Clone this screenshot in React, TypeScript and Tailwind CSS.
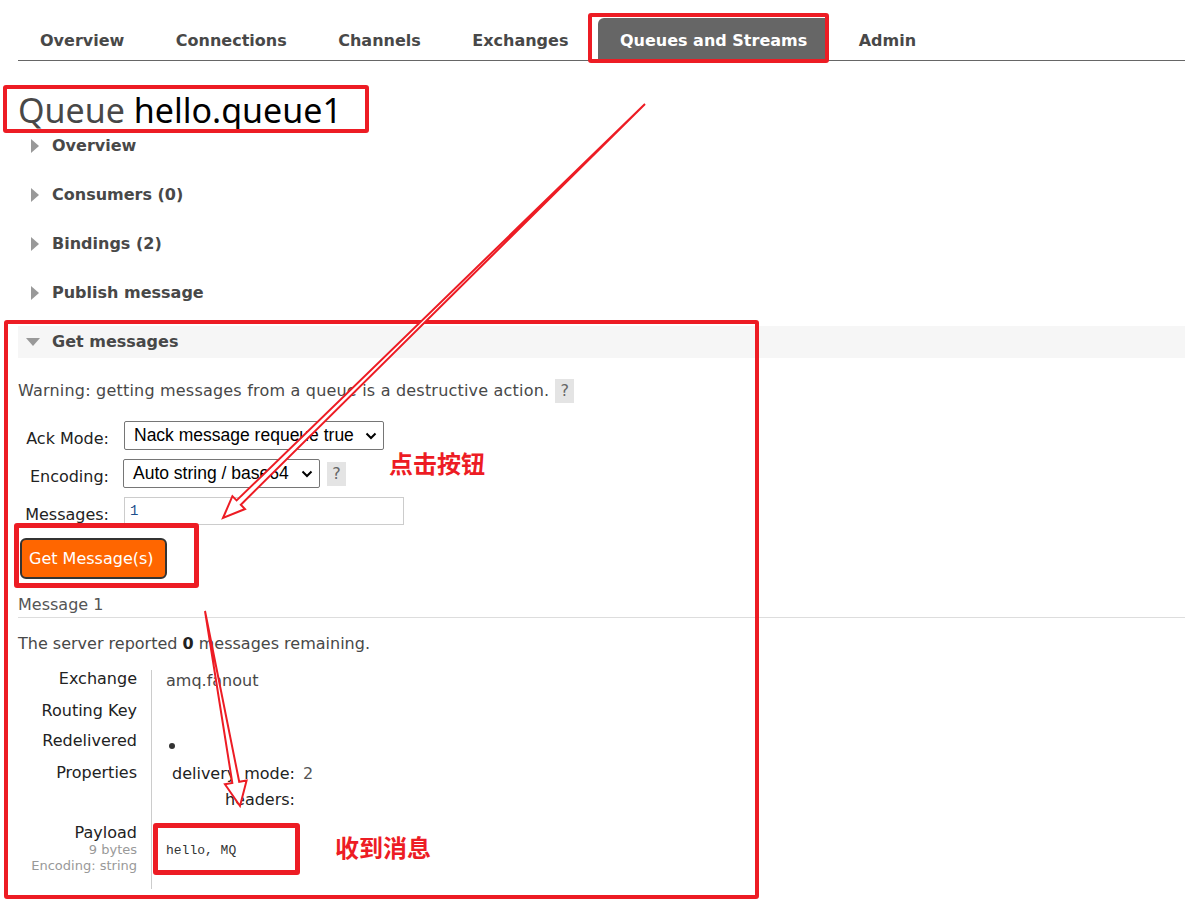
import React from "react";

const body = { fontFamily: '"DejaVu Sans", Verdana, sans-serif' };

const tabs = ["Overview", "Connections", "Channels", "Exchanges", "Queues and Streams", "Admin"];
const sections = ["Overview", "Consumers (0)", "Bindings (2)", "Publish message"];

// arrow outline: thin tail that widens into a hollow head
function arrowPoints(tx: number, ty: number, px: number, py: number, len: number, half: number, shaft: number) {
  const dx = px - tx;
  const dy = py - ty;
  const l = Math.hypot(dx, dy);
  const ux = dx / l;
  const uy = dy / l;
  const nx = -uy;
  const ny = ux;
  const bx = px - ux * len;
  const by = py - uy * len;
  const pts = [
    [tx, ty],
    [bx + nx * shaft, by + ny * shaft],
    [bx + nx * half, by + ny * half],
    [px, py],
    [bx - nx * half, by - ny * half],
    [bx - nx * shaft, by - ny * shaft],
  ];
  return pts.map((p) => p.join(",")).join(" ");
}

const RightTri = () => (
  <span className="inline-block w-0 h-0 border-y-[7px] border-y-transparent border-l-[8px] border-l-[#999] mr-[13px] ml-[13px]" />
);

const Help = ({ className = "" }: { className?: string }) => (
  <span className={"inline-flex items-center justify-center w-[19px] h-[24px] bg-[#e4e4e4] text-[#666] text-[16px] tracking-normal " + className}>
    ?
  </span>
);

const Box = ({ className }: { className: string }) => (
  <div className={"absolute border-[4px] border-[#ed1c24] rounded-[3px] pointer-events-none " + className} />
);

const selectFont = { fontFamily: '"Liberation Sans", Arial, sans-serif' };

const Chevron = () => (
  <svg width="12" height="8" viewBox="0 0 12 8">
    <path d="M1.5 1.5 6 6l4.5-4.5" fill="none" stroke="#000" strokeWidth="2" />
  </svg>
);

const App: React.FC = () => {
  return (
    <div className="relative w-[1185px] h-[906px] overflow-hidden bg-white text-[#484848]" style={body}>
      <div className="pl-[18px]">
        {/* tab bar */}
        <nav className="flex gap-[7.5px] pt-[18px] border-b border-[#666]">
          {tabs.map((t) => (
            <div
              key={t}
              className={
                "h-[42px] px-[22px] pt-[4px] flex items-center text-[16px] font-bold " +
                (t === "Queues and Streams" ? "bg-[#666] text-white rounded-tl-[6px]" : "text-[#484848]")
              }
            >
              {t}
            </div>
          ))}
        </nav>

        <h1 className="mt-[30px] h-[38px] leading-[38px] text-[34px] text-[#484848]" style={{ fontFamily: '"Noto Sans", sans-serif' }}>
          Queue <span className="text-black">hello.queue1</span>
        </h1>

        {/* collapsed sections */}
        <div className="mt-[1px] flex flex-col gap-[17px]">
          {sections.map((s) => (
            <div key={s} className="h-[32px] flex items-center text-[16px] font-bold">
              <RightTri />
              {s}
            </div>
          ))}
          <div className="h-[32px] flex items-center text-[16px] font-bold bg-[#f6f6f6]">
            <span className="inline-block w-0 h-0 border-x-[7px] border-x-transparent border-t-[8px] border-t-[#999] ml-[8px] mr-[12px]" />
            Get messages
          </div>
        </div>

        {/* get messages body */}
        <div className="text-[16px]">
          <div className="mt-[21px] h-[24px] flex items-center tracking-[0.2px]">
            Warning: getting messages from a queue is a destructive action.
            <Help className="ml-[6px]" />
          </div>

          <div className="mt-[18px] flex flex-col gap-[9px] text-[#222]">
            <div className="flex items-center">
              <span className="w-[91px] text-right mt-[7px] leading-[18px]">Ack Mode:</span>
              <div className="ml-[15px] w-[260px] h-[29px] border border-[#767676] rounded-[2px] flex items-center justify-between pl-[9px] pr-[6px] text-[17.5px] text-black" style={selectFont}>
                Nack message requeue true
                <Chevron />
              </div>
            </div>
            <div className="flex items-center">
              <span className="w-[91px] text-right mt-[7px] leading-[18px]">Encoding:</span>
              <div className="ml-[14px] w-[197px] h-[29px] border border-[#767676] rounded-[2px] flex items-center justify-between pl-[9px] pr-[6px] text-[17.5px] text-black" style={selectFont}>
                Auto string / base64
                <Chevron />
              </div>
              <Help className="ml-[7px]" />
            </div>
            <div className="flex items-center">
              <span className="w-[91px] text-right mt-[7px] leading-[18px]">Messages:</span>
              <div className="ml-[15px] w-[280px] h-[28px] border border-[#ccc] flex items-center px-[5px] text-[14px] text-[#1c4e8c]" style={{ fontFamily: '"Liberation Mono", monospace' }}>
                1
              </div>
            </div>
          </div>

          <button className="mt-[13px] ml-[2px] w-[147px] h-[41px] bg-[#ff6600] border-2 border-[#333] rounded-[6px] text-white text-[16px] text-left pl-[7px]">
            Get Message(s)
          </button>

          <div className="mt-[17px] leading-[18px] pb-[3px] border-b border-[#ddd] text-[#555]">Message 1</div>

          <p className="mt-[17px] leading-[18px]">
            The server reported <b className="text-[#222]">0</b> messages remaining.
          </p>

          {/* message details */}
          <div className="mt-[17px] flex text-[#222] leading-[18px]">
            <div className="w-[134px] pr-[14px] text-right border-r border-[#ccc]">
              <div className="h-[32px]">Exchange</div>
              <div className="h-[30px]">Routing Key</div>
              <div className="h-[32px]">Redelivered</div>
              <div className="h-[60px]">Properties</div>
              <div>Payload</div>
              <div className="text-[13px] leading-[16px] text-[#999]">9 bytes</div>
              <div className="text-[13px] leading-[16px] text-[#999] h-[31px]">Encoding: string</div>
            </div>
            <div className="pl-[14px]">
              <div className="h-[32px] pt-[2px] text-[#484848]">amq.fanout</div>
              <div className="h-[30px]" />
              <div className="h-[32px] pl-[3px] pt-[11px]">
                <span className="block w-[6px] h-[6px] rounded-full bg-[#333]" />
              </div>
              <div className="h-[60px]">
                <div className="flex pt-[1px]">
                  <span className="w-[129px] text-right">delivery_mode:</span>
                  <span className="ml-[8px] text-[#555]">2</span>
                </div>
                <div className="flex mt-[8px]">
                  <span className="w-[129px] text-right">headers:</span>
                </div>
              </div>
              <div className="pt-[18px] text-[13px] text-[#333]" style={{ fontFamily: '"Liberation Mono", monospace' }}>
                hello, MQ
              </div>
            </div>
          </div>
        </div>
      </div>

      {/* annotations */}
      <Box className="left-[588px] top-[13px] w-[241px] h-[50px]" />
      <Box className="left-[3px] top-[85px] w-[366px] h-[48px]" />
      <Box className="left-[4px] top-[320px] w-[755px] h-[579px]" />
      <Box className="left-[14px] top-[523px] w-[185px] h-[65px] border-[5px]" />
      <Box className="left-[153px] top-[823px] w-[147px] h-[52px] border-[5px]" />

      <div className="absolute left-[389px] top-[447px] text-[24px] font-bold text-[#ed1c24] leading-[32px]" style={{ fontFamily: '"Noto Sans CJK SC", sans-serif' }}>
        点击按钮
      </div>
      <div className="absolute left-[335px] top-[831px] text-[24px] font-bold text-[#ed1c24] leading-[32px]" style={{ fontFamily: '"Noto Sans CJK SC", sans-serif' }}>
        收到消息
      </div>

      <svg className="absolute inset-0 pointer-events-none" width="1185" height="906">
        <polygon points={arrowPoints(645, 104, 223, 518, 22, 9, 3)} fill="white" stroke="#ed1c24" strokeWidth="2" strokeLinejoin="miter" />
        <polygon points={arrowPoints(205, 611, 240, 806, 24, 11, 3.5)} fill="white" stroke="#ed1c24" strokeWidth="2" strokeLinejoin="miter" />
      </svg>
    </div>
  );
};

export default App;
